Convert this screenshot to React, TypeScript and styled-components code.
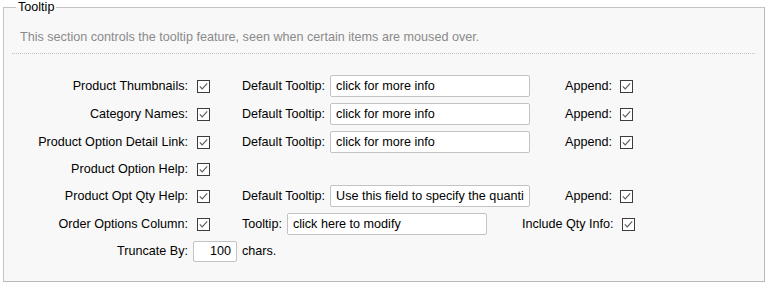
import React from 'react';
import styled, {createGlobalStyle} from 'styled-components';

const GlobalStyle = createGlobalStyle`
  html, body {
    margin: 0;
    padding: 0;
    background: #fff;
  }
  body {
    font-family: "Liberation Sans", Arial, sans-serif;
    font-size: 12.6px;
    color: #000;
  }
`;

interface IRow {
  label: string;
  tipLabel?: string;
  tip?: string;
  extraLabel?: string;
}

const rows: IRow[] = [
  {label: 'Product Thumbnails:', tipLabel: 'Default Tooltip:', tip: 'click for more info', extraLabel: 'Append:'},
  {label: 'Category Names:', tipLabel: 'Default Tooltip:', tip: 'click for more info', extraLabel: 'Append:'},
  {label: 'Product Option Detail Link:', tipLabel: 'Default Tooltip:', tip: 'click for more info', extraLabel: 'Append:'},
  {label: 'Product Option Help:'},
  {
    label: 'Product Opt Qty Help:',
    tipLabel: 'Default Tooltip:',
    tip: 'Use this field to specify the quantity to order',
    extraLabel: 'Append:'
  },
  {label: 'Order Options Column:', tipLabel: 'Tooltip:', tip: 'click here to modify', extraLabel: 'Include Qty Info:'}
];

const Check: React.FC = () => (
  <StyledCheck>
    <svg width="13" height="13" viewBox="0 0 13 13">
      <rect x="0.5" y="0.5" width="12" height="12" fill="#fff" stroke="#3c3c3c" />
      <polyline points="2.8,6.4 5.2,8.9 10.2,3.4" fill="none" stroke="#5a5a5a" strokeWidth="1.1" />
    </svg>
  </StyledCheck>
);

export default function App() {
  return (
    <StyledPage>
      <GlobalStyle />
      <StyledFieldset>
        <StyledLegend>Tooltip</StyledLegend>
        <StyledIntro>This section controls the tooltip feature, seen when certain items are moused over.</StyledIntro>
        <StyledRows>
          {rows.map((r) => (
            <StyledRow key={r.label} tall={!!r.tip}>
              <StyledLabel>{r.label}</StyledLabel>
              <Check />
              {r.tip && (
                <StyledMiddle>
                  <span>{r.tipLabel}</span>
                  <StyledInput readOnly value={r.tip} />
                </StyledMiddle>
              )}
              {r.extraLabel && (
                <StyledExtra>
                  <span>{r.extraLabel}</span>
                  <Check />
                </StyledExtra>
              )}
            </StyledRow>
          ))}
          <StyledRow tall={false}>
            <StyledLabel>Truncate By:</StyledLabel>
            <StyledNumber readOnly value="100" />
            <StyledUnit>chars.</StyledUnit>
          </StyledRow>
        </StyledRows>
      </StyledFieldset>
    </StyledPage>
  );
}

const StyledPage = styled.div`
  padding: 0 3px;
`;
const StyledFieldset = styled.fieldset`
  margin: 0;
  padding: 0 0 17px 0;
  border: 1px solid #c4c4c4;
  border-bottom-color: #b9b9b9;
  border-right-color: #b9b9b9;
  background: #f8f8f8;
  min-width: 0;
`;
const StyledLegend = styled.legend`
  margin-left: 12px;
  padding: 0 2px;
  font-size: 12.6px;
  line-height: 14px;
  color: #000;
`;
const StyledIntro = styled.div`
  margin: 16px 9px 0 8px;
  padding: 0 0 9px 8px;
  line-height: 14px;
  color: #8a8a8a;
  border-bottom: 1px dotted #c2c2c2;
`;
const StyledRows = styled.div`
  margin-top: 18px;
  display: flex;
  flex-direction: column;
`;
const StyledRow = styled.div<{tall: boolean}>`
  display: flex;
  align-items: center;
  height: ${({tall}) => (tall ? 28 : 26)}px;
`;
const StyledLabel = styled.div`
  width: 184px;
  text-align: right;
  white-space: nowrap;
`;
const StyledCheck = styled.span`
  display: inline-flex;
  width: 13px;
  height: 13px;
  margin-left: 9px;
`;
const StyledMiddle = styled.div`
  display: flex;
  align-items: center;
  gap: 5px;
  margin-left: 32px;
`;
const StyledInput = styled.input`
  box-sizing: border-box;
  width: 200px;
  height: 22px;
  padding: 0 5px;
  border: 1px solid #c3c3c3;
  border-radius: 2px;
  background: #fff;
  font-family: "Liberation Sans", Arial, sans-serif;
  font-size: 12.6px;
  color: #000;
  outline: none;
`;
const StyledExtra = styled.div`
  display: flex;
  align-items: center;
  margin-left: 35px;
  ${StyledCheck} {
    margin-left: 8px;
  }
`;
const StyledNumber = styled(StyledInput)`
  width: 44px;
  height: 21px;
  margin-left: 5px;
  text-align: right;
`;
const StyledUnit = styled.span`
  margin-left: 5px;
`;
